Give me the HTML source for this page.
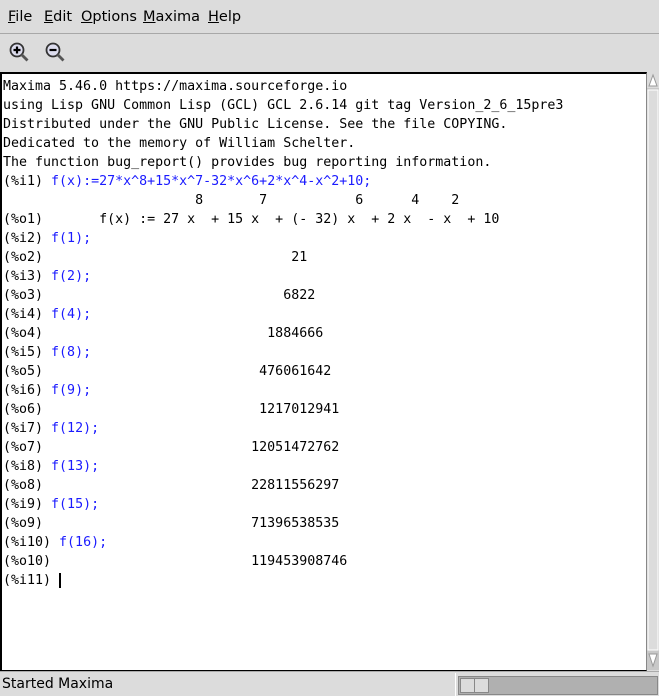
<!DOCTYPE html>
<html><head><style>
body{margin:0;width:659px;height:695px;background:#dcdcdc;position:relative;overflow:hidden;font-family:"DejaVu Sans","Liberation Sans",sans-serif;}
#menu{position:absolute;left:0;top:0;width:659px;height:33px;background:#dcdcdc;border-bottom:1px solid #a8a8a8;font-size:14.5px;}
#menu span{position:absolute;top:9px;color:#000}
#menu u{text-decoration:underline}
#tb{position:absolute;top:34px;left:0;width:659px;height:38px;background:#dcdcdc}
#txt{position:absolute;left:0;top:72px;width:644px;height:596px;background:#fff;border-top:2px solid #000;border-left:2px solid #000;border-bottom:1px solid #000;border-right:1px solid #888}
pre{position:absolute;left:1px;top:3px;margin:0;font-family:"DejaVu Sans Mono","Liberation Mono",monospace;font-size:13.3px;line-height:19px;color:#000}
.b{color:#1a1aff}
#sb{position:absolute;left:647px;top:72px;width:12px;height:598px;background:#c8c8c8}
#st{position:absolute;left:0;top:671px;width:659px;height:24px;background:#dcdcdc;border-top:1px solid #aaa}
</style></head><body>
<div id="menu">
<span style="left:8px"><u>F</u>ile</span>
<span style="left:44px"><u>E</u>dit</span>
<span style="left:81px"><u>O</u>ptions</span>
<span style="left:143px"><u>M</u>axima</span>
<span style="left:208px"><u>H</u>elp</span>
</div>
<div id="tb">
<svg width="80" height="36" style="position:absolute;left:0;top:0">
<circle cx="17" cy="16" r="6.5" fill="#dde" stroke="#333" stroke-width="1.8"/>
<path d="M13.5 16h7M17 12.5v7" stroke="#000" stroke-width="2.2"/>
<path d="M21.5 20.5l6 6" stroke="#555" stroke-width="2.8"/>
<circle cx="53" cy="16" r="6.5" fill="#dde" stroke="#333" stroke-width="1.8"/>
<path d="M49.5 16h7" stroke="#000" stroke-width="2.2"/>
<path d="M57.5 20.5l6 6" stroke="#555" stroke-width="2.8"/>
</svg>
</div>
<div id="txt"><pre>Maxima 5.46.0 https://maxima.sourceforge.io
using Lisp GNU Common Lisp (GCL) GCL 2.6.14 git tag Version_2_6_15pre3
Distributed under the GNU Public License. See the file COPYING.
Dedicated to the memory of William Schelter.
The function bug_report() provides bug reporting information.
(%i1) <span class="b">f(x):=27*x^8+15*x^7-32*x^6+2*x^4-x^2+10;</span>
                        8       7           6      4    2
(%o1)       f(x) := 27 x  + 15 x  + (- 32) x  + 2 x  - x  + 10
(%i2) <span class="b">f(1);</span>
(%o2)                               21
(%i3) <span class="b">f(2);</span>
(%o3)                              6822
(%i4) <span class="b">f(4);</span>
(%o4)                            1884666
(%i5) <span class="b">f(8);</span>
(%o5)                           476061642
(%i6) <span class="b">f(9);</span>
(%o6)                           1217012941
(%i7) <span class="b">f(12);</span>
(%o7)                          12051472762
(%i8) <span class="b">f(13);</span>
(%o8)                          22811556297
(%i9) <span class="b">f(15);</span>
(%o9)                          71396538535
(%i10) <span class="b">f(16);</span>
(%o10)                         119453908746
(%i11) <span style="border-left:2px solid #000"> </span></pre></div>
<div id="sb">
<svg width="12" height="598" style="position:absolute;left:0;top:0">
<rect x="0" y="0" width="12" height="16" fill="#dcdcdc"/>
<path d="M2 14L6 3L10 14Z" fill="#fff" stroke="#999"/>
<rect x="1" y="18" width="10" height="560" fill="#dcdcdc" stroke="#fff"/>
<path d="M2 582L6 594L10 582Z" fill="#fff" stroke="#999"/>
</svg>
</div>
<div id="st">
<span style="position:absolute;left:2px;top:4px;font-size:14px;color:#000">Started Maxima</span>
<div style="position:absolute;left:455px;top:1px;width:204px;height:23px;background:#dcdcdc;border-left:1px solid #fff"></div>
<div style="position:absolute;left:458px;top:4px;width:198px;height:17px;background:#b0b0b0;border:1px solid #888"></div>
<div style="position:absolute;left:460px;top:6px;width:14px;height:13px;background:#dcdcdc;border:1px solid #888"></div>
<div style="position:absolute;left:474px;top:6px;width:13px;height:13px;background:#dcdcdc;border:1px solid #888"></div>
</div>
</body></html>
